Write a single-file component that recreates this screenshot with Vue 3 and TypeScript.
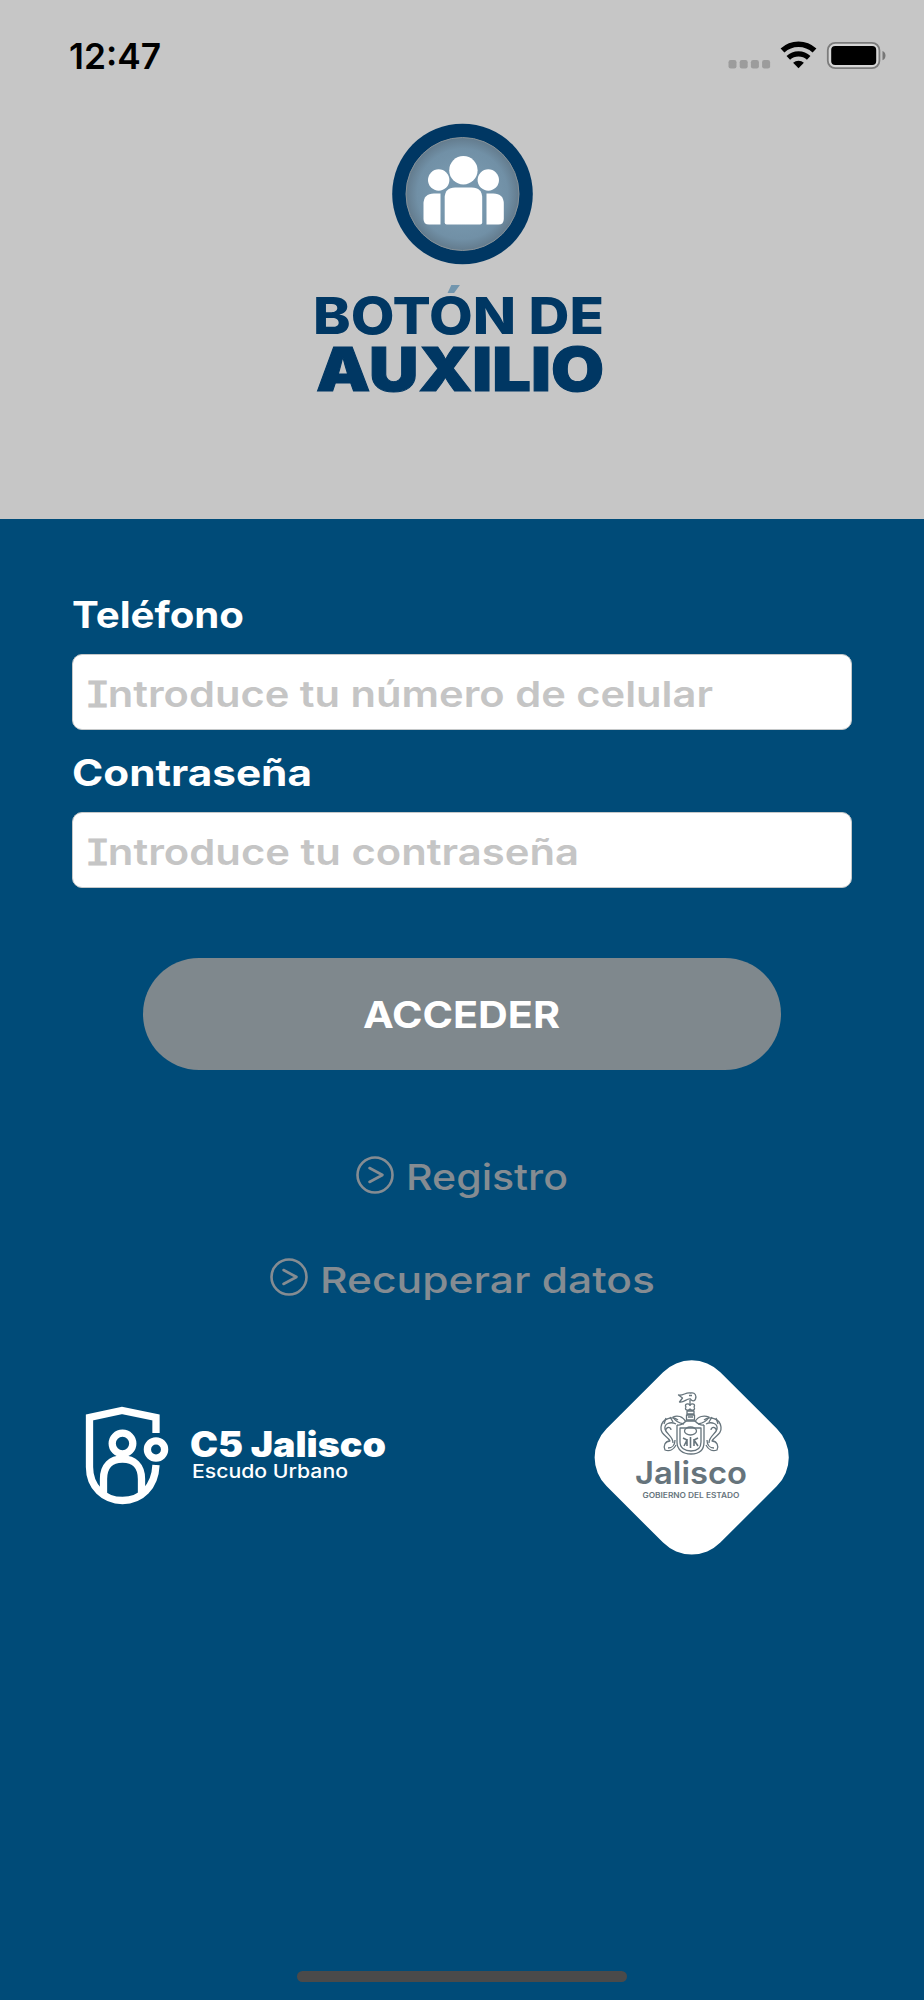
<script setup lang="ts">
import { ref } from "vue";

interface Field {
  id: string;
  label: string;
  labelWidth: number;
  first: string;
  rest: string;
  hintWidth: number;
}

interface LinkItem {
  text: string;
  width: number;
}

// textos del formulario
const fields = ref<Field[]>([
  { id: "tel", label: "Teléfono", labelWidth: 172, first: "I", rest: "ntroduce tu número de celular", hintWidth: 628 },
  { id: "pass", label: "Contraseña", labelWidth: 240, first: "I", rest: "ntroduce tu contraseña", hintWidth: 494 },
]);

const links = ref<LinkItem[]>([
  { text: "Registro", width: 162 },
  { text: "Recuperar datos", width: 335 },
]);
</script>

<template>
  <div class="screen">
    <header class="top">
      <div class="status">
        <svg class="time" width="100" height="44" viewBox="0 0 100 44">
          <text x="3" y="33" textLength="92" lengthAdjust="spacingAndGlyphs">12:47</text>
        </svg>
        <svg width="160" height="40" viewBox="0 0 160 40">
          <g fill="#9c9c9c">
            <rect v-for="i in 4" :key="i" :x="2.5 + (i - 1) * 11.2" y="24" width="8" height="8.5" rx="2.2" />
          </g>
          <g fill="none" stroke="#000">
            <path d="M56.5 14.5a23.5 23.5 0 0 1 32 0" stroke-width="5.6" />
            <path d="M62.3 21.8a15 15 0 0 1 20.4 0" stroke-width="5.2" />
          </g>
          <path d="M72.5 32.3l-5.4-5.5a8 8 0 0 1 10.8 0z" />
          <rect x="101.8" y="6.8" width="51.6" height="25.4" rx="7.5" fill="#d6d6d6" stroke="#7c7c7c" stroke-width="1.8" />
          <rect x="105.2" y="10" width="45" height="19" rx="4" />
          <path d="M156.5 15c4 1.5 4 7.8 0 9.3z" fill="#777" />
        </svg>
      </div>

      <svg class="logo" width="320" height="290" viewBox="300 120 320 290">
        <defs>
          <radialGradient id="disc">
            <stop offset="0.45" stop-color="#7797ad" />
            <stop offset="0.8" stop-color="#7190a6" />
            <stop offset="1" stop-color="#637b8d" />
          </radialGradient>
          <linearGradient id="accent" gradientUnits="userSpaceOnUse" x1="0" y1="280" x2="0" y2="304">
            <stop offset="0.56" stop-color="#7296ae" />
            <stop offset="0.56" stop-color="#003763" />
          </linearGradient>
        </defs>
        <circle cx="462.5" cy="194" r="70.3" fill="#003763" />
        <circle cx="462.5" cy="194" r="56.5" fill="url(#disc)" stroke="#879299" />
        <g fill="#fff">
          <circle cx="463.4" cy="170.2" r="14.2" />
          <circle cx="438.7" cy="180" r="10.7" />
          <circle cx="488.3" cy="180" r="10.7" />
          <path d="M444.7 198q0-10.5 10.5-10.5h16.500q10.5 0 10.5 10.5v24.500q0 2-2 2h-33.500q-2 0-2-2z" />
          <path d="M440.5 193.500v31h-11.500q-5.500 0-5.500-5.500v-15q0-10.500 10.500-10.500z" />
          <path d="M486.500 193.500v31h12q5.300 0 5.300-5.500v-15q0-10.500-10.500-10.500z" />
        </g>
        <text class="line1" x="313" y="333.5" textLength="291" lengthAdjust="spacingAndGlyphs" fill="url(#accent)">BOTÓN DE</text>
        <text class="line2" x="316" y="391" textLength="288" lengthAdjust="spacingAndGlyphs">AUXILIO</text>
      </svg>
    </header>

    <main class="body">
      <form class="form" @submit.prevent>
        <div v-for="f in fields" :key="f.id" class="field">
          <svg class="label" width="400" height="50" viewBox="0 0 400 50">
            <text x="0" y="37.5" :textLength="f.labelWidth" lengthAdjust="spacingAndGlyphs">{{ f.label }}</text>
          </svg>
          <div class="input">
            <svg width="700" height="50" viewBox="0 0 700 50">
              <text x="-3" y="39.5" :textLength="f.hintWidth" lengthAdjust="spacingAndGlyphs"><tspan class="slab">{{ f.first }}</tspan><tspan dx="-2">{{ f.rest }}</tspan></text>
            </svg>
          </div>
        </div>
        <button class="access" type="submit">
          <svg width="200" height="50" viewBox="0 0 200 50">
            <text x="1" y="39" textLength="197" lengthAdjust="spacingAndGlyphs">ACCEDER</text>
          </svg>
        </button>
      </form>

      <nav class="links">
        <a v-for="l in links" :key="l.text" class="link">
          <svg class="arrow" width="38" height="38" viewBox="0 0 38 38" fill="none" stroke="#858c92" stroke-width="2.6">
            <circle cx="19" cy="19" r="17.5" />
            <path d="M13.500 12l13 7-13 7" stroke-linecap="round" stroke-linejoin="round" />
          </svg>
          <svg :width="l.width" height="50">
            <text x="0" y="38.5" :textLength="l.width" lengthAdjust="spacingAndGlyphs">{{ l.text }}</text>
          </svg>
        </a>
      </nav>

      <footer class="brands">
        <svg width="330" height="130" viewBox="0 0 330 130">
          <g fill="none" stroke="#fff" stroke-width="7.3">
            <path d="M86 43V27.500L52 20.500 19.500 27.500V77C19.500 97 34 110.500 52.500 110.500S85 97 86 75" />
            <circle cx="52.500" cy="53.500" r="10.300" />
            <circle cx="86" cy="59.500" r="8.600" />
            <path d="M33.500 103V89C33.500 76 41 69 52.500 69S71.500 76 71.500 89V103" />
          </g>
          <text class="c5" x="120" y="66.5" textLength="196" lengthAdjust="spacingAndGlyphs">C5 Jalisco</text>
          <text class="urban" x="122" y="87.7" textLength="156" lengthAdjust="spacingAndGlyphs">Escudo Urbano</text>
        </svg>

        <svg width="220" height="220" viewBox="0 0 220 220">
          <rect x="31.2" y="26.9" width="161" height="161" rx="40.5" fill="#fff" transform="rotate(45 111.7 107.4)" />
          <!-- escudo de armas -->
          <g fill="none" stroke="#66747c" stroke-width="1.3" stroke-linejoin="round">
            <path d="M110 56V50M98.500 45c5 1 7-3 12-2 5-1 6 3 5 6-1 3-4 2-5 0-4-1-6 4-11 3l3-4zM109 45.500h3" />
            <path d="M106 57c-2-3 2-4 4-2 2-2 6-1 4 2 2 3-2 4-4 2-2 2-6 1-4-2zM107 61h7v3h-7zM106.500 65h8v5h-8zM108 67h5" />
            <path d="M97 75c4 1 7-2 9-4h9c2 2 5 5 9 4M97 75v17c0 8 6 12 14 12s13-4 13-12V75" />
            <path d="M100 78v14c0 6 5 9 11 9s10-3 10-9V78z" />
            <ellipse cx="110.500" cy="81" rx="6" ry="4" />
            <path d="M103 88l4 2-3 6M107 89v7M114 89v7M118 88l-4 2 4 6M110.500 87v11" stroke-width="1.600" />
            <path d="M106 72c-3-6-9-7-13-5 2 4 6 6 11 7M115 72c3-6 9-7 14-5-2 4-6 6-11 7" />
            <path d="M98 70c-5-4-16-2-17 7-1 8 7 9 9 14-5 0-7 5-5 9 5 2 9-1 11-5M124 70c5-4 16-2 17 7 1 8-7 9-9 14 5 0 7 5 5 9-5 2-9-1-11-5" />
            <path d="M96 74c-6-3-12 0-11 5 1 5 8 7 8 14M91 80c0-4-6-3-5 1M126 74c6-3 12 0 11 5-1 5-8 7-8 14M131 80c0-4 6-3 5 1" />
            <path d="M86 68l-2 6M90 67l3 5M136 68l2 6M132 67l-3 5M88 98c4 0 7-3 7-8M134 98c-4 0-7-3-7-8" />
          </g>
          <text class="state" x="55" y="133.5" textLength="112" lengthAdjust="spacingAndGlyphs">Jalisco</text>
          <text class="gov" x="62.5" y="147.5" textLength="97" lengthAdjust="spacingAndGlyphs">GOBIERNO DEL ESTADO</text>
        </svg>
      </footer>

      <div class="home-bar"></div>
    </main>
  </div>
</template>

<style>
body {
  margin: 0;
}
</style>

<style scoped>
.screen {
  width: 924px;
  height: 2000px;
  display: flex;
  flex-direction: column;
  background: #004b78;
  font-family: Inter, "Liberation Sans", sans-serif;
}

svg {
  display: block;
  flex-shrink: 0;
  overflow: visible;
}

.top {
  box-sizing: border-box;
  height: 519px;
  padding-top: 36px;
  background: #c6c6c6;
}

.status {
  height: 84px;
  display: flex;
  justify-content: space-between;
  padding: 0 38px 0 66px;
}

.time text {
  font-size: 36px;
  font-weight: 600;
}

.logo {
  margin-left: 300px;
}

.logo text {
  font-weight: 800;
}

.line1 {
  font-size: 51.5px;
}

.logo .line2 {
  font-size: 60.5px;
  font-weight: 900;
  fill: #003763;
  stroke: #003763;
  stroke-width: 1px;
}

.body {
  flex: 1;
  display: flex;
  flex-direction: column;
}

.form {
  display: flex;
  flex-direction: column;
  padding: 71px 72px 0;
}

.field {
  height: 157.5px;
}

.label {
  margin-bottom: 14px;
}

.label text {
  font-size: 37px;
  font-weight: 700;
  fill: #fff;
}

.input {
  box-sizing: border-box;
  height: 76px;
  padding: 12px 15px;
  border: 1px solid #c5c8c9;
  border-radius: 10px;
  background: #fff;
}

.input text {
  font-size: 36px;
  font-weight: 600;
  fill: #c5c5c5;
}

.slab {
  font-family: "DejaVu Sans Mono", monospace;
  font-weight: 400;
  stroke: #c5c5c5;
  stroke-width: 1.2px;
}

.access {
  align-self: center;
  width: 638px;
  height: 112px;
  display: flex;
  justify-content: center;
  align-items: center;
  margin-top: 53px;
  padding: 0;
  border: 0;
  border-radius: 56px;
  background: #7f888d;
}

.access text {
  font-family: Inter, "Liberation Sans", sans-serif;
  font-size: 36.5px;
  font-weight: 700;
  fill: #fff;
}

.links {
  display: flex;
  flex-direction: column;
  align-items: center;
  gap: 52.5px;
  padding-top: 81px;
}

.link {
  display: flex;
  align-items: center;
  gap: 12px;
  height: 50px;
}

.arrow {
  margin-bottom: 3px;
}

.link text {
  font-size: 36px;
  font-weight: 500;
  fill: #858c92;
}

.brands {
  display: flex;
  align-items: flex-start;
  justify-content: space-between;
  margin-top: 46.5px;
  padding: 0 124px 0 70px;
}

.brands svg:first-child {
  margin-top: 40px;
}

.c5 {
  font-size: 35px;
  font-weight: 900;
  fill: #fff;
}

.urban {
  font-size: 18.5px;
  font-weight: 500;
  fill: #fff;
}

.state {
  font-size: 31px;
  font-weight: 600;
  fill: #66747c;
}

.gov {
  font-size: 7.5px;
  font-weight: 600;
  fill: #66747c;
}

.home-bar {
  width: 330px;
  height: 11px;
  margin: auto auto 18px 297px;
  border-radius: 6px;
  background: #4a4a4a;
}
</style>
